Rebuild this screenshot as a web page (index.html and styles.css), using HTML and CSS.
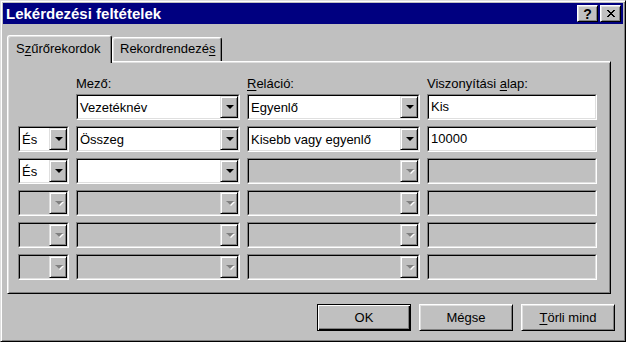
FILE: index.html
```html
<!DOCTYPE html>
<html lang="hu">

<head>
    <meta charset="UTF-8">
    <title>Lekérdezési feltételek</title>
    <link rel="stylesheet" href="styles.css">
</head>

<body>
    <div class="window">
        <div class="titlebar">
            <span class="title">Lekérdezési feltételek</span>
            <div class="title-buttons">
                <div class="tbtn help">?</div>
                <div class="tbtn close">
                    <svg width="8" height="7" viewBox="0 0 8 7" shape-rendering="crispEdges">
                        <path d="M0 0h2v1h1v1h2v-1h1v-1h2v1h-1v1h-1v1h-1v1h1v1h1v1h1v1h-2v-1h-1v-1h-2v1h-1v1h-2v-1h1v-1h1v-1h1v-1h-1v-1h-1v-1h-1z" />
                    </svg>
                </div>
            </div>
        </div>

        <div class="tabs">
            <div class="tab active">S<u>z</u>űrőrekordok</div>
            <div class="tab">Rekordrendezé<u>s</u></div>
        </div>

        <div class="panel">
            <div class="criteria">
                <div></div>
                <div class="label">Mező:</div>
                <div class="label"><u>R</u>eláció:</div>
                <div class="label">Viszonyítási <u>a</u>lap:</div>

                <div></div>
                <div class="combo"><div class="combo-in"><span class="value">Vezetéknév</span><span class="drop"><i class="arrow"></i></span></div></div>
                <div class="combo"><div class="combo-in"><span class="value">Egyenlő</span><span class="drop"><i class="arrow"></i></span></div></div>
                <div class="field"><div class="field-in">Kis</div></div>

                <div class="combo"><div class="combo-in"><span class="value">És</span><span class="drop"><i class="arrow"></i></span></div></div>
                <div class="combo"><div class="combo-in"><span class="value">Összeg</span><span class="drop"><i class="arrow"></i></span></div></div>
                <div class="combo"><div class="combo-in"><span class="value">Kisebb vagy egyenlő</span><span class="drop"><i class="arrow"></i></span></div></div>
                <div class="field"><div class="field-in">10000</div></div>

                <div class="combo"><div class="combo-in"><span class="value">És</span><span class="drop"><i class="arrow"></i></span></div></div>
                <div class="combo"><div class="combo-in"><span class="value"></span><span class="drop"><i class="arrow"></i></span></div></div>
                <div class="combo disabled"><div class="combo-in"><span class="value"></span><span class="drop"><i class="arrow"></i></span></div></div>
                <div class="field disabled"><div class="field-in"></div></div>

                <div class="combo disabled"><div class="combo-in"><span class="value"></span><span class="drop"><i class="arrow"></i></span></div></div>
                <div class="combo disabled"><div class="combo-in"><span class="value"></span><span class="drop"><i class="arrow"></i></span></div></div>
                <div class="combo disabled"><div class="combo-in"><span class="value"></span><span class="drop"><i class="arrow"></i></span></div></div>
                <div class="field disabled"><div class="field-in"></div></div>

                <div class="combo disabled"><div class="combo-in"><span class="value"></span><span class="drop"><i class="arrow"></i></span></div></div>
                <div class="combo disabled"><div class="combo-in"><span class="value"></span><span class="drop"><i class="arrow"></i></span></div></div>
                <div class="combo disabled"><div class="combo-in"><span class="value"></span><span class="drop"><i class="arrow"></i></span></div></div>
                <div class="field disabled"><div class="field-in"></div></div>

                <div class="combo disabled"><div class="combo-in"><span class="value"></span><span class="drop"><i class="arrow"></i></span></div></div>
                <div class="combo disabled"><div class="combo-in"><span class="value"></span><span class="drop"><i class="arrow"></i></span></div></div>
                <div class="combo disabled"><div class="combo-in"><span class="value"></span><span class="drop"><i class="arrow"></i></span></div></div>
                <div class="field disabled"><div class="field-in"></div></div>
            </div>
        </div>

        <div class="buttons">
            <button class="btn default">OK</button>
            <button class="btn">Mégse</button>
            <button class="btn"><u>T</u>örli mind</button>
        </div>
    </div>
</body>

</html>
```

FILE: styles.css
```css
body {
    margin: 0;
    padding: 0;
    font-family: 'Liberation Sans', Arial, sans-serif;
    font-size: 13px;
    color: #000;
    background-color: #c0c0c0;
}

u {
    text-decoration-thickness: 1px;
    text-underline-offset: 2px;
}

.window {
    width: 626px;
    height: 342px;
    box-sizing: border-box;
    padding: 2px;
    background-color: #c0c0c0;
    border: 1px solid;
    border-color: #dfdfdf #000 #000 #dfdfdf;
    box-shadow: inset 1px 1px #fff, inset -1px -1px #808080;
}

/* title bar */

.titlebar {
    height: 21px;
    display: flex;
    align-items: center;
    justify-content: space-between;
    background-color: #000080;
    color: #fff;
    padding: 0 2px 0 3px;
}

.title {
    font-weight: bold;
    font-size: 15px;
    line-height: 18px;
}

.title-buttons {
    display: flex;
    gap: 2px;
}

.tbtn {
    width: 21px;
    height: 17px;
    box-sizing: border-box;
    display: flex;
    align-items: center;
    justify-content: center;
    background-color: #c0c0c0;
    color: #000;
    border: 1px solid;
    border-color: #fff #000 #000 #fff;
    box-shadow: inset 1px 1px #dfdfdf, inset -1px -1px #808080;
    font-weight: bold;
    font-size: 14px;
    line-height: 14px;
}

.tbtn svg {
    display: block;
}

/* tabs */

.tabs {
    display: flex;
    align-items: flex-end;
    height: 26px;
    margin: 11px 0 0 4px;
}

.tab {
    height: 24px;
    box-sizing: border-box;
    padding: 3px 0 0 7px;
    width: 110px;
    line-height: 15px;
    background-color: #c0c0c0;
    border: 1px solid;
    border-bottom: none;
    border-color: #fff #000 #000 #fff;
    border-radius: 3px 3px 0 0;
    box-shadow: inset 1px 1px #dfdfdf, inset -1px 0 #808080;
}

.tab.active {
    position: relative;
    z-index: 1;
    width: 105px;
    height: 28px;
    margin-bottom: -2px;
    padding: 5px 0 0 8px;
}

/* panel */

.panel {
    width: 604px;
    height: 233px;
    box-sizing: border-box;
    margin-left: 4px;
    padding: 14px 0 0 10px;
    border: 1px solid;
    border-color: #fff #000 #000 #fff;
    box-shadow: inset 1px 1px #dfdfdf, inset -1px -1px #808080;
}

.criteria {
    display: grid;
    grid-template-columns: 51px 164px 173px 170px;
    grid-template-rows: 12px;
    grid-auto-rows: 26px;
    column-gap: 7px;
    row-gap: 6px;
}

.criteria .label {
    line-height: 15px;
    height: 12px;
    white-space: nowrap;
}

.combo,
.field {
    box-sizing: border-box;
    height: 26px;
    border: 1px solid;
    border-color: #808080 #fff #fff #808080;
}

.combo-in,
.field-in {
    height: 100%;
    box-sizing: border-box;
    border: 1px solid;
    border-color: #000 #dfdfdf #dfdfdf #000;
    background-color: #fff;
}

.combo-in {
    display: flex;
    align-items: center;
}

.value {
    flex: 1;
    padding-left: 2px;
    white-space: nowrap;
    overflow: hidden;
}

.field-in {
    padding: 3px 0 0 2px;
    line-height: 15px;
}

.drop {
    width: 18px;
    height: 22px;
    box-sizing: border-box;
    display: flex;
    align-items: center;
    justify-content: center;
    background-color: #c0c0c0;
    border: 1px solid;
    border-color: #dfdfdf #000 #000 #dfdfdf;
    box-shadow: inset 1px 1px #fff, inset -1px -1px #808080;
}

.arrow {
    width: 0;
    height: 0;
    border-top: 4px solid #000;
    border-left: 4px solid transparent;
    border-right: 4px solid transparent;
    margin-left: 1px;
}

.disabled .combo-in,
.disabled.field .field-in {
    background-color: #c0c0c0;
}

.disabled .arrow {
    border-top-color: #808080;
    filter: drop-shadow(1px 1px 0 #fff);
}

/* buttons */

.buttons {
    display: flex;
    justify-content: flex-end;
    gap: 8px;
    margin: 10px 8px 0 0;
}

.btn {
    width: 94px;
    height: 27px;
    box-sizing: border-box;
    font-family: inherit;
    font-size: 13px;
    color: #000;
    background-color: #c0c0c0;
    border: 1px solid;
    border-color: #fff #000 #000 #fff;
    box-shadow: inset 1px 1px #dfdfdf, inset -1px -1px #808080;
    padding: 0;
}

.btn.default {
    border-color: #000;
    box-shadow: inset 1px 1px #fff, inset -1px -1px #000, inset -2px -2px #808080;
}
```
